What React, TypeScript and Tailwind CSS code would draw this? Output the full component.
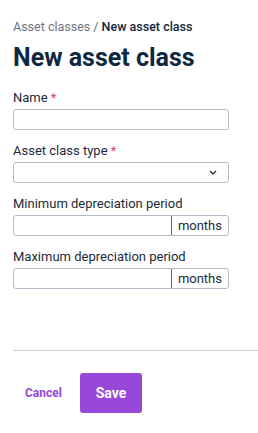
import React from "react";

function Label({ children, required }: { children: React.ReactNode; required?: boolean }) {
  return (
    <div className="text-[13px] leading-[16px] text-[#1c2b3a]">
      {children}
      {required && <span className="text-[#e0457b]"> *</span>}
    </div>
  );
}

function MonthsInput() {
  return (
    <div className="mt-[3px] flex h-[21px] w-[216px] rounded-[3px] border border-[#b9b9cc] bg-white">
      <input className="min-w-0 flex-1 bg-transparent px-2 text-[13px] outline-none" />
      <div className="flex items-center border-l border-[#5d6470] px-[6px] text-[13px] text-[#1c2b3a]">months</div>
    </div>
  );
}

export default function App() {
  return (
    <div className="min-h-[433px] w-[258px] bg-white pt-[19px] font-['Roboto',sans-serif]">
      <div className="px-[13px]">
        <div className="text-[12.5px] leading-[16px]">
          <span className="text-[#6b7480]">Asset classes / </span>
          <span className="font-medium text-[#10263a]">New asset class</span>
        </div>
        <h1 className="mt-[9px] text-[25px] font-bold leading-[28px] text-[#0d2840]">New asset class</h1>

        <div className="mt-[18px] flex flex-col gap-[13px]">
          <div>
            <Label required>Name</Label>
            <div className="mt-[3px] h-[21px] w-[216px] rounded-[3px] border border-[#b9b9cc] bg-white" />
          </div>
          <div>
            <Label required>Asset class type</Label>
            <div className="mt-[3px] flex h-[21px] w-[216px] items-center justify-end rounded-[3px] border border-[#b9b9cc] bg-white pr-[11px]">
              <svg width="8" height="5" viewBox="0 0 8 5" fill="none">
                <path d="M1 1 L4 4 L7 1" stroke="#1c2b3a" strokeWidth="1.3" />
              </svg>
            </div>
          </div>
          <div>
            <Label>Minimum depreciation period</Label>
            <MonthsInput />
          </div>
          <div>
            <Label>Maximum depreciation period</Label>
            <MonthsInput />
          </div>
        </div>
      </div>

      <div className="ml-[13px] mt-[61px] border-t border-[#cfcde0]" />

      <div className="mt-[22px] flex items-center gap-[6px] px-[13px]">
        <button className="px-[12px] text-[12px] font-bold text-[#9448d8]">Cancel</button>
        <button className="h-[40px] w-[62px] rounded-[3px] bg-[#9748db] text-[14px] font-bold text-white">Save</button>
      </div>
    </div>
  );
}
